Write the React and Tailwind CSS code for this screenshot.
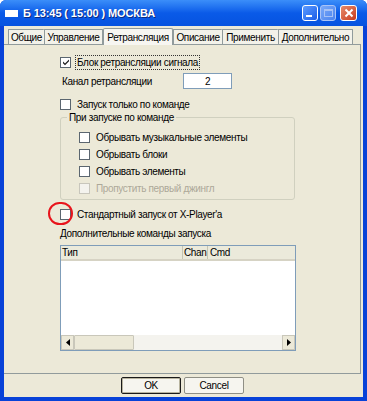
import React from "react";

const font = { fontFamily: '"Liberation Sans", Arial, sans-serif' };

function Check({ checked, disabled }) {
  return (
    <span
      className={`w-[11px] h-[11px] shrink-0 border flex items-center justify-center ${
        disabled ? "border-[#c8c6bc] bg-[#f4f3ee]" : "border-[#5b6670] bg-white"
      }`}
    >
      {checked && (
        <svg width="8" height="8" viewBox="0 0 8 8">
          <path d="M1 3.5 L3 5.5 L7 1.5 L7 3.2 L3 7.2 L1 5.2 Z" fill="#1a1a1a" />
        </svg>
      )}
    </span>
  );
}

function CheckRow({ label, checked, disabled, focus, className = "" }) {
  return (
    <div className={`flex items-center h-[16px] ${className}`}>
      <Check checked={checked} disabled={disabled} />
      <span
        className={`ml-[5px] px-[1px] leading-[13px] ${
          focus ? "outline outline-1 outline-dotted outline-[#333]" : ""
        } ${disabled ? "text-[#aca899]" : "text-black"}`}
      >
        {label}
      </span>
    </div>
  );
}

const tabs = ["Общие", "Управление", "Ретрансляция", "Описание", "Применить", "Дополнительно"];
const tabW = [36, 59, 70, 49, 56, 75];

export default function App() {
  return (
    <div className="w-[367px] h-[401px] bg-white" style={font}>
      <div className="w-[367px] h-[401px] flex flex-col bg-[#0842d8] rounded-t-[6px] overflow-hidden text-[10px] tracking-[-0.35px]">
        {/* title bar */}
        <div className="h-[26px] shrink-0 flex items-center pl-[5px] pr-[10px] bg-linear-to-b from-[#3b8ef9] via-[#0a5ae8] to-[#0653e0]">
          <span className="w-[13px] h-[7px] bg-white mt-[1px]" />
          <span className="ml-[5px] text-white font-bold text-[11px] tracking-[-0.1px] [text-shadow:1px_1px_0_#0a2a80]">
            Б 13:45 ( 15:00 ) МОСКВА
          </span>
          <div className="ml-auto flex items-center gap-[2px]">
            <div className="w-[16px] h-[16px] rounded-[3px] border border-white bg-linear-to-br from-[#5c9bff] to-[#1c5ce8] flex items-end pl-[3px] pb-[3px]">
              <span className="w-[6px] h-[2px] bg-white" />
            </div>
            <div className="w-[16px] h-[16px] rounded-[3px] border border-[#a9c4f7] bg-linear-to-br from-[#7aa9f8] to-[#4a83ef] flex items-center justify-center">
              <span className="w-[9px] h-[8px] border border-[#a6c2f6] border-t-2" />
            </div>
            <div className="ml-[2px] w-[17px] h-[16px] rounded-[3px] border border-white bg-linear-to-br from-[#e68a6a] to-[#c8381a] flex items-center justify-center">
              <svg width="10" height="10" viewBox="0 0 10 10">
                <path d="M1.5 1.5 L8.5 8.5 M8.5 1.5 L1.5 8.5" stroke="white" strokeWidth="2" />
              </svg>
            </div>
          </div>
        </div>

        {/* body */}
        <div className="flex-1 mx-[4px] mb-[4px] bg-[#ece9d8] flex flex-col">
          {/* tabs */}
          <div className="h-[17px] mt-[1px] flex items-end pl-[4px]">
            {tabs.map((t, i) => {
              const sel = i === 2;
              return (
                <div
                  key={t}
                  style={{ width: tabW[i] }}
                  className={`flex items-center justify-center border-[#919b9c] border-t border-l ${
                    i === tabs.length - 1 || i === 1 ? "border-r" : ""
                  } ${
                    sel
                      ? "h-[17px] bg-[#f7f6f1] border-r relative z-10 -mb-[1px] rounded-t-[2px]"
                      : "h-[15px] bg-[#f3f2ea] rounded-t-[1px]"
                  } text-black shrink-0`}
                >
                  {t}
                </div>
              );
            })}
          </div>

          {/* tab panel */}
          <div className="h-[330px] mr-[2px] border border-[#919b9c] border-l-0 bg-[#ece9d8] pl-[56px] pt-[9px] flex flex-col">
            <CheckRow checked focus label="Блок ретрансляции сигнала" />
            <div className="flex items-center h-[16px] mt-[3px]">
              <span className="ml-[2px] w-[121px]">Канал ретрансляции</span>
              <div className="w-[49px] h-[16px] border border-[#7f9db9] bg-white flex items-center justify-center">
                2
              </div>
            </div>
            <CheckRow className="mt-[7px]" label="Запуск только по команде" />

            {/* group */}
            <div className="relative mt-[5px] w-[235px] h-[83px] border border-[#d0d0bf] rounded-[3px] pt-[11px] pl-[18px]">
              <span className="absolute -top-[8px] left-[6px] px-[2px] bg-[#ece9d8]">При запуске по команде</span>
              <div className="flex flex-col gap-[1px]">
                <CheckRow label="Обрывать музыкальные элементы" />
                <CheckRow label="Обрывать блоки" />
                <CheckRow label="Обрывать элементы" />
                <CheckRow disabled label="Пропустить первый джингл" />
              </div>
            </div>

            <div className="relative mt-[6px]">
              <CheckRow label="Стандартный запуск от X-Player'a" />
              <span className="absolute left-[-12px] -top-[4px] w-[25px] h-[23px] rounded-full border-2 border-[#e8141c]" />
            </div>
            <div className="mt-[3px] h-[16px] flex items-center">Дополнительные команды запуска</div>

            {/* list view */}
            <div className="mt-[4px] w-[236px] h-[106px] border border-[#7f9db9] bg-white flex flex-col">
              <div className="h-[15px] flex bg-[#ebeadb] border-b-2 border-[#d6d3c4] shrink-0">
                <div className="w-[122px] pl-[1px] border-r border-[#c7c5b2] flex items-center">Тип</div>
                <div className="w-[25px] pl-[1px] border-r border-[#c7c5b2] flex items-center">Chan</div>
                <div className="flex-1 pl-[2px] flex items-center">Cmd</div>
              </div>
              <div className="flex-1" />
              <div className="h-[15px] flex bg-[#f4f3ee] shrink-0">
                <div className="w-[13px] h-[15px] bg-[#ece9d8] border border-[#c9c7ba] flex items-center justify-center">
                  <svg width="4" height="7" viewBox="0 0 4 7"><path d="M4 0 L0 3.5 L4 7 Z" fill="#000" /></svg>
                </div>
                <div className="w-[60px] h-[15px] bg-[#ece9d8] border border-[#c9c7ba] rounded-[1px]" />
                <div className="flex-1" />
                <div className="w-[13px] h-[15px] bg-[#ece9d8] border border-[#c9c7ba] flex items-center justify-center">
                  <svg width="4" height="7" viewBox="0 0 4 7"><path d="M0 0 L4 3.5 L0 7 Z" fill="#000" /></svg>
                </div>
              </div>
            </div>
          </div>

          {/* buttons */}
          <div className="flex-1 flex items-center justify-center gap-[3px] pr-[2px]">
            <button className="w-[60px] h-[17px] border border-[#1a1a1a] rounded-[2px] bg-[#f6f5ef] shadow-[inset_0_0_0_1px_#b8b49f] leading-none">
              OK
            </button>
            <button className="w-[60px] h-[17px] border border-[#8f8f85] rounded-[2px] bg-[#f6f5ef] leading-none">
              Cancel
            </button>
          </div>
        </div>
      </div>
    </div>
  );
}
